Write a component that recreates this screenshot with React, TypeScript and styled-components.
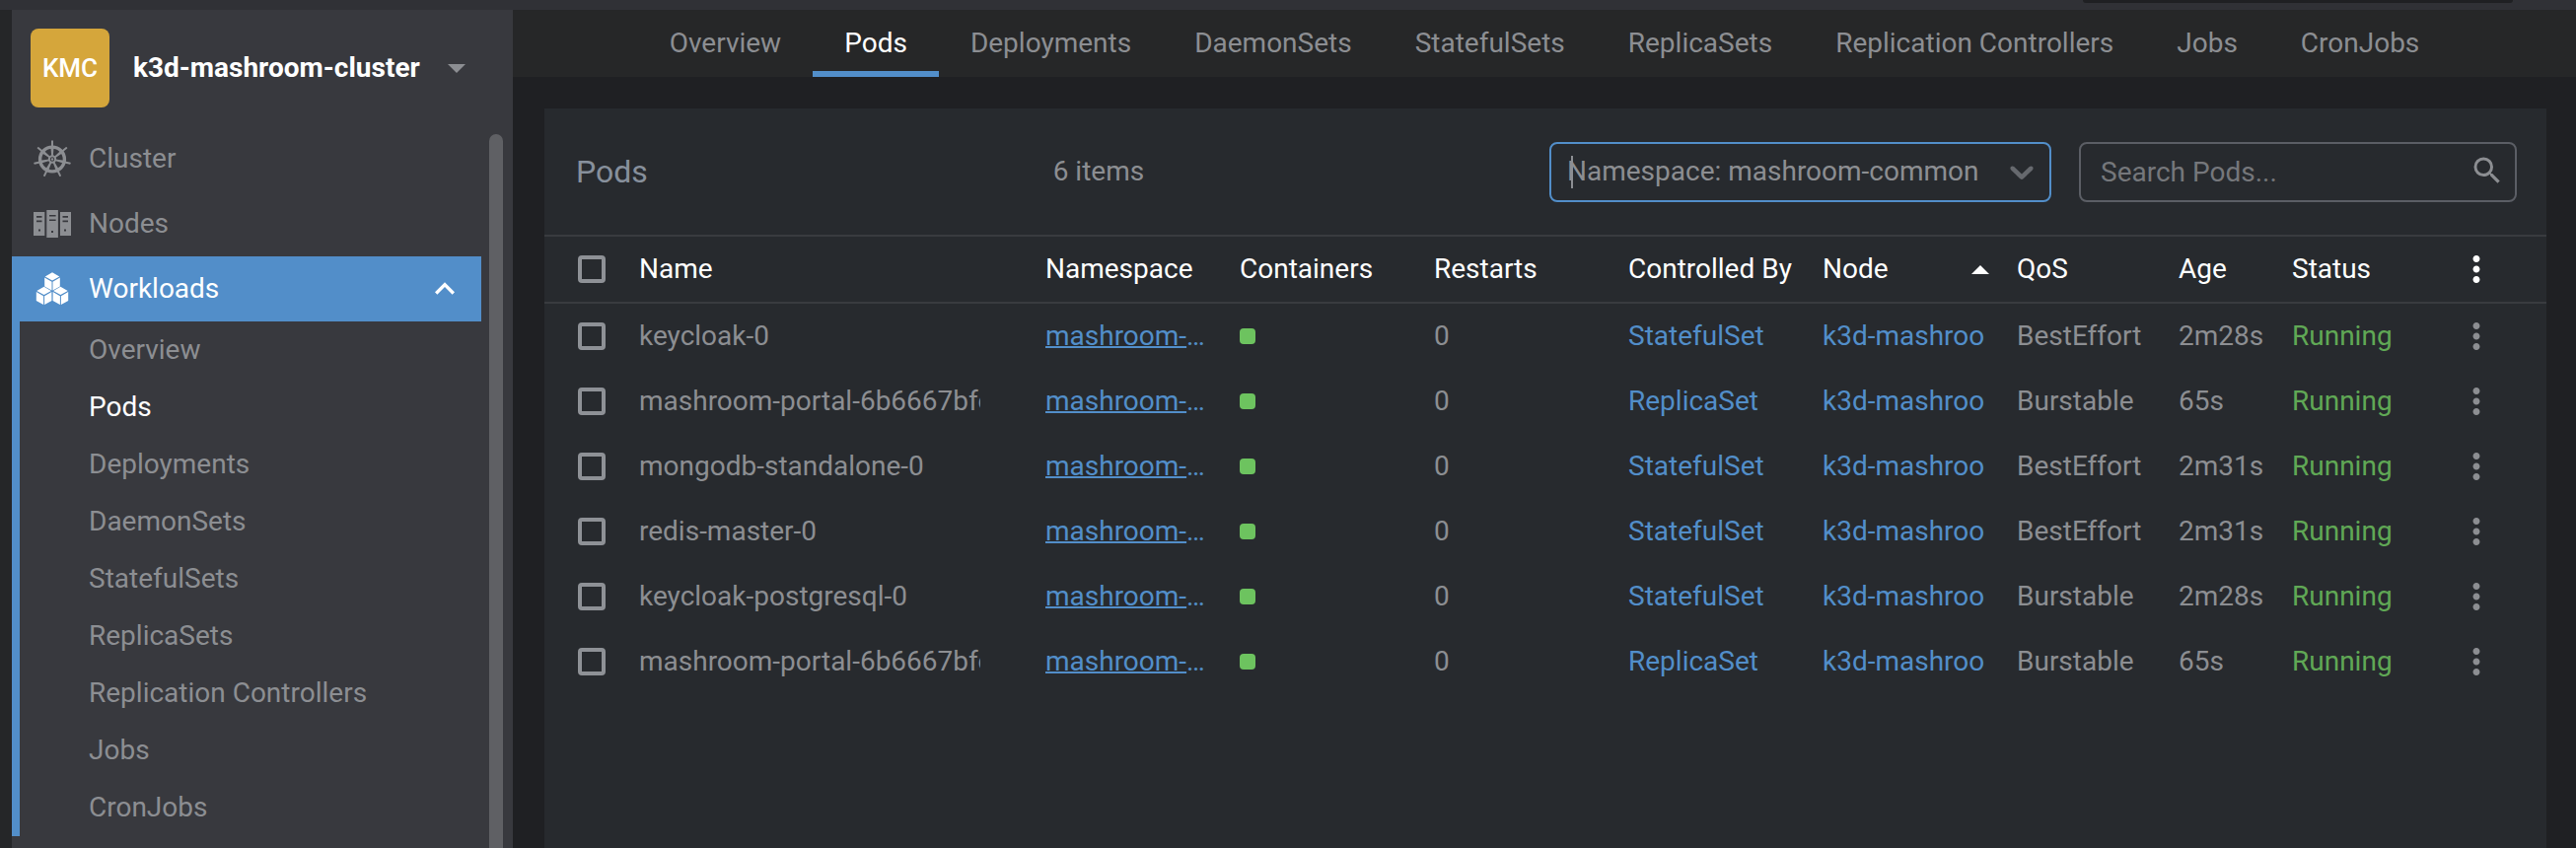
import React from "react";
import styled, { createGlobalStyle, css } from "styled-components";
import { MdExpandLess, MdMoreVert, MdSearch } from "react-icons/md";

const color = {
  topBar: "#303136",
  rail: "#252628",
  tabs: "#262728",
  page: "#1f2023",
  sidebar: "#38393e",
  panel: "#272a2e",
  line: "#393b3f",
  text: "#8c8e92",
  title: "#87909c",
  bright: "#ffffff",
  blue: "#528ec9",
  green: "#60a855",
  brick: "#6dc35f",
  gold: "#d5a63b",
  field: "#5b5e65",
};

const GlobalStyle = createGlobalStyle`
  * { box-sizing: border-box; }
  body {
    margin: 0;
    background: ${color.page};
    color: ${color.text};
    font-family: Roboto, "Liberation Sans", sans-serif;
    font-size: 28px;
    line-height: 32px;
  }
  button, input, select { font: inherit; }
  a { color: inherit; text-decoration: none; }
  ul { margin: 0; padding: 0; list-style: none; }
`;

const Page = styled.div`
  display: flex;
  flex-direction: column;
  height: 100vh;
  overflow: hidden;
`;

const TopBar = styled.div`
  display: flex;
  flex: none;
  justify-content: flex-end;
  height: 10px;
  padding-right: 64px;
  background: ${color.topBar};
`;

const TopBarSlot = styled.div`
  width: 436px;
  height: 3px;
  border-radius: 0 0 4px 4px;
  background: ${color.page};
`;

const Workspace = styled.div`
  display: flex;
  flex: 1;
  min-height: 0;
`;

const Rail = styled.div`
  flex: none;
  width: 12px;
  background: ${color.rail};
`;

const Sidebar = styled.aside`
  display: flex;
  flex: none;
  flex-direction: column;
  width: 508px;
  background: ${color.sidebar};
`;

const ClusterButton = styled.button`
  display: flex;
  flex: none;
  align-items: center;
  height: 118px;
  padding: 0 20px 0 19px;
  border: 0;
  background: none;
  color: ${color.bright};
  font-weight: 700;
  text-align: left;
`;

const Avatar = styled.span`
  display: flex;
  align-items: center;
  justify-content: center;
  width: 80px;
  height: 80px;
  margin-right: 24px;
  border-radius: 8px;
  background: ${color.gold};
  font-size: 26px;
  font-weight: 500;
`;

const Triangle = styled.svg`
  flex: none;
  width: 18px;
  height: 9px;
  fill: currentColor;
`;

const ClusterCaret = styled(Triangle)`
  margin-left: 28px;
  color: ${color.text};
`;

const SidebarBody = styled.div`
  display: flex;
  flex: 1;
  gap: 8px;
  min-height: 0;
  padding-right: 10px;
`;

const Nav = styled.nav`
  flex: 1;
  min-width: 0;
  overflow: hidden;
`;

const ScrollThumb = styled.div`
  width: 14px;
  margin-top: 8px;
  border-radius: 7px 7px 0 0;
  background: #5f6064;
`;

const NavItem = styled.a<{ $active?: boolean }>`
  display: flex;
  align-items: center;
  height: 66px;
  padding: 0 17px 0 21px;
  ${(p) =>
    p.$active &&
    css`
      background: ${color.blue};
      color: ${color.bright};
    `}
`;

const NavIcon = styled.svg`
  width: 40px;
  height: 40px;
  margin-right: 17px;
  fill: currentColor;
`;

const NavLabel = styled.span`
  flex: 1;
`;

const SubMenu = styled.ul`
  border-left: 8px solid ${color.blue};
`;

const SubLink = styled.a<{ $active?: boolean }>`
  display: block;
  padding: 13px 0 13px 70px;
  color: ${(p) => (p.$active ? color.bright : color.text)};
`;

const Main = styled.main`
  display: flex;
  flex: 1;
  flex-direction: column;
  min-width: 0;
`;

const Tabs = styled.nav`
  display: flex;
  flex: none;
  justify-content: center;
  height: 68px;
  background: ${color.tabs};
`;

const Tab = styled.a<{ $active?: boolean }>`
  padding: 18px 32px 12px;
  border-bottom: 6px solid ${(p) => (p.$active ? color.blue : "transparent")};
  color: ${(p) => (p.$active ? color.bright : color.text)};
  white-space: nowrap;
`;

const Panel = styled.section`
  flex: 1;
  margin: 32px 30px 0 32px;
  background: ${color.panel};
`;

const PanelHeader = styled.header`
  display: flex;
  align-items: center;
  height: 130px;
  padding: 0 30px 0 32px;
  border-bottom: 2px solid ${color.line};
`;

const Title = styled.h1`
  margin: 0;
  color: ${color.title};
  font-size: 32px;
  font-weight: 400;
`;

const ItemCount = styled.div`
  flex: 1;
  text-align: center;
`;

const Field = styled.div<{ $width: number }>`
  position: relative;
  width: ${(p) => p.$width}px;
`;

const controlStyle = css`
  display: block;
  width: 100%;
  height: 61px;
  border: 2px solid ${color.field};
  border-radius: 8px;
  outline: none;
  background: transparent;
  color: ${color.text};
`;

const NamespaceSelect = styled.select`
  ${controlStyle}
  padding: 0 60px 0 16px;
  border-color: ${color.blue};
  appearance: none;
`;

const SearchInput = styled.input`
  ${controlStyle}
  padding: 0 60px 0 20px;
  &::placeholder {
    color: #75777b;
    opacity: 1;
  }
`;

const Filters = styled.div`
  display: flex;
  gap: 28px;
`;

const TextCursor = styled.span`
  position: absolute;
  top: 14px;
  left: 22px;
  width: 2px;
  height: 33px;
  background: ${color.text};
`;

const SelectChevron = styled.svg`
  position: absolute;
  top: 10px;
  right: 10px;
  width: 40px;
  height: 40px;
  fill: #66696e;
  pointer-events: none;
`;

const SearchIcon = styled(MdSearch)`
  position: absolute;
  top: 11px;
  right: 12px;
  width: 36px;
  height: 36px;
`;

const Table = styled.table`
  display: block;
  width: 100%;
`;

const TableHead = styled.thead`
  display: block;
  border-bottom: 2px solid ${color.line};
  color: ${color.bright};
`;

const TableBody = styled.tbody`
  display: block;
`;

const Row = styled.tr`
  display: grid;
  grid-template-columns:
    80px minmax(0, 412fr) repeat(5, minmax(0, 197fr))
    minmax(0, 164fr) minmax(0, 115fr) minmax(0, 132fr) 142px;
  align-items: center;
  height: 66px;
`;

const HeadCell = styled.th`
  display: flex;
  align-items: center;
  justify-content: space-between;
  padding: 0 12px 0 16px;
  font-weight: 400;
  text-align: left;
  white-space: nowrap;
`;

const Cell = styled.td<{ $tone?: string }>`
  padding: 0;
  margin: 0 16px;
  overflow: hidden;
  color: ${(p) => p.$tone ?? color.text};
  text-overflow: ellipsis;
  white-space: nowrap;
`;

const NameCell = styled(Cell)`
  margin-right: 50px;
  text-overflow: clip;
`;

const ShortCell = styled(Cell)`
  margin-right: 0;
`;

const NamespaceLink = styled.a`
  text-decoration: underline;
  text-decoration-thickness: 2px;
`;

const CheckCell = styled.td`
  display: flex;
  padding: 0 0 0 34px;
`;

const Checkbox = styled.input`
  width: 28px;
  height: 28px;
  margin: 0;
  border: 4px solid #8e9196;
  border-radius: 4px;
  appearance: none;
`;

const Brick = styled.span`
  display: block;
  width: 16px;
  height: 16px;
  border-radius: 4px;
  background: ${color.brick};
`;

const MenuCell = styled.td`
  display: flex;
  justify-content: center;
  padding: 0;
`;

const MenuButton = styled.button`
  display: flex;
  padding: 0;
  border: 0;
  background: none;
  color: inherit;
  font-size: 42px;
`;

const ExpandIcon = styled(MdExpandLess)`
  width: 40px;
  height: 40px;
`;

const spokes = [0, 1, 2, 3, 4, 5, 6].map((n) => (n * 360) / 7);

const WheelIcon = () => (
  <NavIcon viewBox="0 0 40 40" aria-hidden="true">
    <circle cx="20" cy="20.5" r="12.4" fill="none" stroke="currentColor" strokeWidth="3.4" />
    <circle cx="20" cy="20.5" r="3.2" fill="none" stroke="currentColor" strokeWidth="2" />
    <circle cx="20" cy="20.5" r="1.2" />
    {spokes.map((angle) => (
      <g key={angle} transform={`rotate(${angle} 20 20.5)`}>
        <path d="M19.200 17.500L18.400 8h3.200l-.8 9.500z" />
        <path d="M19 8.500V1.800q1-1.200 2 0V8.500z" />
      </g>
    ))}
  </NavIcon>
);

const ServersIcon = () => (
  <NavIcon viewBox="0 0 40 40" aria-hidden="true">
    <path
      fillRule="evenodd"
      d="M1 8h11.300v24H1zM4 12v1.700h5.500V12zM4 16.500v1.700h5.500v-1.700zM6 25.500v2h2v-2z
         M14.300 6h11.600v28H14.300zM17 11v1.600h6.600V11zM17 15.500v1.600h6.600v-1.600zM19 27v2h2v-2z
         M28 8h11v24H28zM30.500 12v1.700H36V12zM30.500 16.500v1.700H36v-1.700zM32 25.500v2h2v-2z"
    />
  </NavIcon>
);

const cubeOrigins = [
  [20, 3.3],
  [11.6, 17.8],
  [28.4, 17.8],
];

const CubesIcon = () => (
  <NavIcon viewBox="0 0 40 40" aria-hidden="true">
    {cubeOrigins.map(([x, y]) => (
      <g key={`${x}-${y}`} transform={`translate(${x} ${y})`}>
        <path d="M0 0L7.300 4.100 0 8.300-7.300 4.100z" />
        <path d="M-7.800 5.300L-.5 9.400V18.300L-7.800 14.300z" />
        <path d="M7.800 5.300L.5 9.400V18.300L7.800 14.300z" />
      </g>
    ))}
  </NavIcon>
);

const kinds = [
  "Overview",
  "Pods",
  "Deployments",
  "DaemonSets",
  "StatefulSets",
  "ReplicaSets",
  "Replication Controllers",
  "Jobs",
  "CronJobs",
];

const columns = ["Name", "Namespace", "Containers", "Restarts", "Controlled By", "Node", "QoS", "Age", "Status"];

interface Pod {
  name: string;
  owner: string;
  qos: string;
  age: string;
}

const pods: Pod[] = [
  { name: "keycloak-0", owner: "StatefulSet", qos: "BestEffort", age: "2m28s" },
  { name: "mashroom-portal-6b6667bfc", owner: "ReplicaSet", qos: "Burstable", age: "65s" },
  { name: "mongodb-standalone-0", owner: "StatefulSet", qos: "BestEffort", age: "2m31s" },
  { name: "redis-master-0", owner: "StatefulSet", qos: "BestEffort", age: "2m31s" },
  { name: "keycloak-postgresql-0", owner: "StatefulSet", qos: "Burstable", age: "2m28s" },
  { name: "mashroom-portal-6b6667bfc", owner: "ReplicaSet", qos: "Burstable", age: "65s" },
];

const PodRow = ({ pod }: { pod: Pod }) => (
  <Row>
    <CheckCell>
      <Checkbox type="checkbox" aria-label={`Select ${pod.name}`} />
    </CheckCell>
    <NameCell>{pod.name}</NameCell>
    <Cell $tone={color.blue}>
      <NamespaceLink href="#namespace">mashroom-common</NamespaceLink>
    </Cell>
    <Cell>
      <Brick />
    </Cell>
    <Cell>0</Cell>
    <Cell $tone={color.blue}>
      <a href="#owner">{pod.owner}</a>
    </Cell>
    <Cell $tone={color.blue}>
      <a href="#node">k3d-mashroo</a>
    </Cell>
    <Cell>{pod.qos}</Cell>
    <ShortCell>{pod.age}</ShortCell>
    <ShortCell $tone={color.green}>Running</ShortCell>
    <MenuCell>
      <MenuButton type="button" aria-label={`Actions for ${pod.name}`}>
        <MdMoreVert />
      </MenuButton>
    </MenuCell>
  </Row>
);

export default function App() {
  return (
    <Page>
      <GlobalStyle />
      <TopBar>
        <TopBarSlot />
      </TopBar>
      <Workspace>
        <Rail />
        <Sidebar>
          <ClusterButton type="button">
            <Avatar>KMC</Avatar>
            <span>k3d-mashroom-cluster</span>
            <ClusterCaret viewBox="0 0 18 9" aria-hidden="true">
              <path d="M0 0h18L9 9z" />
            </ClusterCaret>
          </ClusterButton>
          <SidebarBody>
            <Nav aria-label="Cluster resources">
              <NavItem href="#cluster">
                <WheelIcon />
                <NavLabel>Cluster</NavLabel>
              </NavItem>
              <NavItem href="#nodes">
                <ServersIcon />
                <NavLabel>Nodes</NavLabel>
              </NavItem>
              <NavItem href="#workloads" $active>
                <CubesIcon />
                <NavLabel>Workloads</NavLabel>
                <ExpandIcon />
              </NavItem>
              <SubMenu>
                {kinds.map((kind) => (
                  <li key={kind}>
                    <SubLink href="#kind" $active={kind === "Pods"}>
                      {kind}
                    </SubLink>
                  </li>
                ))}
              </SubMenu>
            </Nav>
            <ScrollThumb />
          </SidebarBody>
        </Sidebar>
        <Main>
          <Tabs aria-label="Workloads">
            {kinds.map((kind) => (
              <Tab key={kind} href="#tab" $active={kind === "Pods"}>
                {kind}
              </Tab>
            ))}
          </Tabs>
          <Panel>
            <PanelHeader>
              <Title>Pods</Title>
              <ItemCount>6 items</ItemCount>
              <Filters>
                <Field $width={509}>
                  <NamespaceSelect aria-label="Namespace">
                    <option>Namespace: mashroom-common</option>
                  </NamespaceSelect>
                  <TextCursor />
                  <SelectChevron viewBox="0 0 20 20" aria-hidden="true">
                    <path d="M4.516 7.548c0.436-0.446 1.043-0.481 1.576 0l3.908 3.747 3.908-3.747c0.533-0.481 1.141-0.446 1.574 0 0.436 0.445 0.408 1.197 0 1.615-0.406 0.418-4.695 4.502-4.695 4.502-0.217 0.223-0.502 0.335-0.787 0.335s-0.570-0.112-0.789-0.335c0 0-4.287-4.084-4.695-4.502s-0.436-1.170 0-1.615z" />
                  </SelectChevron>
                </Field>
                <Field $width={444}>
                  <SearchInput type="text" aria-label="Search Pods" placeholder="Search Pods..." />
                  <SearchIcon />
                </Field>
              </Filters>
            </PanelHeader>
            <Table>
              <TableHead>
                <Row>
                  <CheckCell>
                    <Checkbox type="checkbox" aria-label="Select all pods" />
                  </CheckCell>
                  {columns.map((column) => (
                    <HeadCell key={column} scope="col">
                      {column}
                      {column === "Node" && (
                        <Triangle viewBox="0 0 18 9" aria-hidden="true">
                          <path d="M0 9h18L9 0z" />
                        </Triangle>
                      )}
                    </HeadCell>
                  ))}
                  <MenuCell>
                    <MenuButton type="button" aria-label="Choose columns">
                      <MdMoreVert />
                    </MenuButton>
                  </MenuCell>
                </Row>
              </TableHead>
              <TableBody>
                {pods.map((pod, index) => (
                  <PodRow key={index} pod={pod} />
                ))}
              </TableBody>
            </Table>
          </Panel>
        </Main>
      </Workspace>
    </Page>
  );
}
